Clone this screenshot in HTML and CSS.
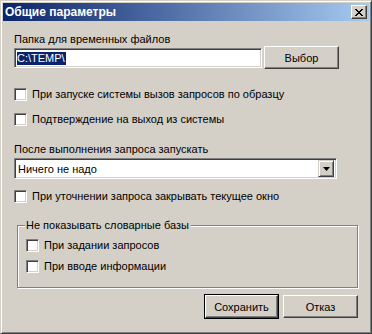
FILE: index.html
```html
<!DOCTYPE html>
<html lang="ru">
<head>
    <meta charset="UTF-8">
    <title>Общие параметры</title>
    <link rel="stylesheet" href="styles.css">
</head>
<body>
    <div class="window">
        <!-- Title bar -->
        <div class="titlebar">
            <span class="title">Общие параметры</span>
            <span class="close-btn">
                <svg width="8" height="7" viewBox="0 0 8 7">
                    <path d="M0 0h2v1h1v1h2v-1h1v-1h2v1h-1v1h-1v1h-1v1h1v1h1v1h1v1h-2v-1h-1v-1h-2v1h-1v1h-2v-1h1v-1h1v-1h1v-1h-1v-1h-1v-1h-1z" fill="#000"/>
                </svg>
            </span>
        </div>

        <div class="content">
            <div class="label label-folder">Папка для временных файлов</div>
            <div class="folder-row">
                <div class="field folder-field"><span class="selected">C:\TEMP\</span></div>
                <div class="button browse-btn">Выбор</div>
            </div>

            <div class="check check-first"><span class="box"></span>При запуске системы вызов запросов по образцу</div>
            <div class="check check-second"><span class="box"></span>Подтверждение на выход из системы</div>

            <div class="label label-after">После выполнения запроса запускать</div>
            <div class="field combo">
                <span class="combo-text">Ничего не надо</span>
                <span class="combo-btn">
                    <svg width="7" height="4" viewBox="0 0 7 4"><path d="M0 0h7L3.5 4z" fill="#000"/></svg>
                </span>
            </div>

            <div class="check check-third"><span class="box"></span>При уточнении запроса закрывать текущее окно</div>

            <fieldset class="group">
                <legend>Не показывать словарные базы</legend>
                <div class="check"><span class="box"></span>При задании запросов</div>
                <div class="check check-inner"><span class="box"></span>При вводе информации</div>
            </fieldset>

            <div class="footer">
                <div class="button default-btn">Сохранить</div>
                <div class="button">Отказ</div>
            </div>
        </div>
    </div>
</body>
</html>
```

FILE: styles.css
```css
body {
    margin: 0;
    padding: 0;
    font-family: "Liberation Sans", Arial, sans-serif;
    font-size: 11px;
    color: #000;
    background-color: #d4d0c8;
}

.window {
    width: 372px;
    height: 334px;
    box-sizing: border-box;
    padding: 2px;
    background-color: #d4d0c8;
    border: 1px solid;
    border-color: #d4d0c8 #404040 #404040 #d4d0c8;
    box-shadow: inset 1px 1px 0 #fff, inset -1px -1px 0 #808080;
}

/* Title bar */
.titlebar {
    height: 18px;
    display: flex;
    align-items: center;
    justify-content: space-between;
    padding: 0 2px 0 2px;
    background: linear-gradient(to right, #0a246a, #a6caf0);
}

    .titlebar .title {
        color: #fff;
        font-weight: bold;
        font-size: 12px;
    }

.close-btn {
    width: 16px;
    height: 14px;
    box-sizing: border-box;
    display: flex;
    align-items: center;
    justify-content: center;
    background-color: #d4d0c8;
    border: 1px solid;
    border-color: #fff #404040 #404040 #fff;
    box-shadow: inset -1px -1px 0 #808080;
}

/* Content */
.content {
    padding: 0 11px 0 11px;
}

.label {
    line-height: 13px;
    height: 13px;
}

.label-folder {
    margin-top: 12px;
}

.folder-row {
    display: flex;
    align-items: center;
    height: 23px;
}

.field {
    box-sizing: border-box;
    background-color: #fff;
    border: 1px solid;
    border-color: #808080 #fff #fff #808080;
    box-shadow: inset 1px 1px 0 #404040, inset -1px -1px 0 #d4d0c8;
}

.folder-field {
    width: 248px;
    height: 20px;
    padding: 3px 2px;
    line-height: 12px;
}

    .folder-field .selected {
        background-color: #0a246a;
        color: #fff;
        padding: 0 1px 1px 0;
    }

.button {
    box-sizing: border-box;
    height: 23px;
    display: flex;
    align-items: center;
    justify-content: center;
    background-color: #d4d0c8;
    border: 1px solid;
    border-color: #fff #404040 #404040 #fff;
    box-shadow: inset -1px -1px 0 #808080;
}

.browse-btn {
    width: 75px;
    margin-left: 2px;
}

/* Checkboxes */
.check {
    display: flex;
    align-items: center;
    height: 13px;
    line-height: 13px;
}

    .check .box {
        width: 13px;
        height: 13px;
        box-sizing: border-box;
        margin-right: 5px;
        background-color: #fff;
        border: 1px solid;
        border-color: #808080 #fff #fff #808080;
        box-shadow: inset 1px 1px 0 #404040, inset -1px -1px 0 #d4d0c8;
    }

.check-first {
    margin-top: 19px;
}

.check-second {
    margin-top: 12px;
}

.label-after {
    margin-top: 17px;
}

/* Combo box */
.combo {
    width: 323px;
    height: 21px;
    margin-top: 2px;
    display: flex;
    align-items: center;
    justify-content: space-between;
    padding: 2px;
}

.combo-text {
    padding-left: 1px;
}

.combo-btn {
    width: 16px;
    height: 17px;
    box-sizing: border-box;
    display: flex;
    align-items: center;
    justify-content: center;
    background-color: #d4d0c8;
    border: 1px solid;
    border-color: #d4d0c8 #404040 #404040 #d4d0c8;
    box-shadow: inset 1px 1px 0 #fff, inset -1px -1px 0 #808080;
}

.check-third {
    margin-top: 11px;
}

/* Group box */
.group {
    margin: 16px 0 0 3px;
    padding: 7px 8px 14px 8px;
    border: 1px solid #808080;
    box-shadow: 1px 1px 0 #fff, inset 1px 1px 0 #fff;
}

    .group legend {
        padding: 0 2px 0 1px;
        margin-left: -1px;
        background-color: #d4d0c8;
        line-height: 13px;
    }

.check-inner {
    margin-top: 8px;
}

/* Buttons */
.footer {
    display: flex;
    justify-content: flex-end;
    gap: 5px;
    margin-top: 7px;
}

    .footer .button {
        width: 75px;
        height: 23px;
    }

    .footer .default-btn {
        width: 73px;
        outline: 1px solid #000;
    }
```
